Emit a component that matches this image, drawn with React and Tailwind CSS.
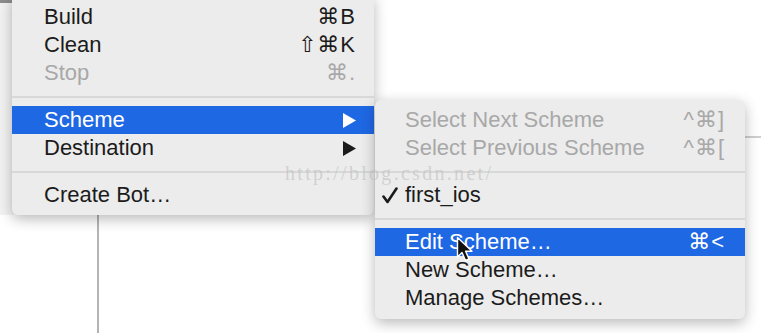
const FONT = { fontFamily: '"Liberation Sans", "DejaVu Sans", Arial, sans-serif' };

function Arrow() {
  return (
    <svg width="13" height="15" viewBox="0 0 13 15" className="fill-current">
      <path d="M0 0 L13 7.5 L0 15 Z" />
    </svg>
  );
}

function Check() {
  return (
    <svg width="16" height="17" viewBox="0 0 16 17">
      <path d="M1.5 9.5 L5.5 15 L14.5 1.5" fill="none" stroke="#1b1b1b" strokeWidth="2.6" strokeLinecap="round" strokeLinejoin="round" />
    </svg>
  );
}

function Row({ label, shortcut, disabled, active, arrow, gutter, check }) {
  const color = active ? "text-white" : disabled ? "text-[#a8a8a8]" : "text-[#1b1b1b]";
  return (
    <div
      className={`flex items-center h-7 text-[22px] leading-none ${color} ${
        active ? "bg-[#1f68e4]" : ""
      } ${gutter ? "pl-[7px] pr-[20px]" : "pl-[32px] pr-[18px]"}`}
    >
      {gutter && <span className="w-[23px] flex items-center">{check && <Check />}</span>}
      <span className="flex-1">{label}</span>
      {shortcut && <span className="tracking-[1px]">{shortcut}</span>}
      {arrow && <Arrow />}
    </div>
  );
}

function Sep() {
  return (
    <div className="h-[19px] flex items-center">
      <div className="w-full h-[2px] bg-[#d8d8d8]" />
    </div>
  );
}

function Cursor() {
  return (
    <svg className="absolute left-[456px] top-[236px]" width="18" height="28" viewBox="0 0 18 28">
      <path
        d="M1.5 1.5 L1.5 21 L6 16.5 L9.5 24.5 L13 23 L9.6 15.2 L16 15.2 Z"
        fill="#111"
        stroke="#fff"
        strokeWidth="1.4"
        strokeLinejoin="round"
      />
    </svg>
  );
}

export default function App() {
  return (
    <div className="relative w-[761px] h-[333px] bg-white overflow-hidden" style={FONT}>
      {/* background window bits */}
      <div className="absolute left-0 top-0 w-[14px] h-[215px] bg-[#f2f2f2]">
        <div className="h-[3px] bg-[#8c8c8c]" />
      </div>
      <div className="absolute left-[97px] top-[210px] w-[2px] h-[130px] bg-[#b4b4b4]" />
      <div className="absolute left-[740px] top-[136px] w-[30px] h-[2px] bg-[#cfcfcf]" />

      {/* main menu */}
      <div className="absolute left-[12px] top-[-5px] w-[362px] pt-[8px] pb-[6px] bg-[#ececec] rounded-b-[6px] shadow-[0_4px_14px_rgba(0,0,0,0.28)]">
        <Row label="Build" shortcut="⌘B" />
        <Row label="Clean" shortcut="⇧⌘K" />
        <Row label="Stop" shortcut="⌘." disabled />
        <Sep />
        <Row label="Scheme" arrow active />
        <Row label="Destination" arrow />
        <Sep />
        <Row label="Create Bot…" />
      </div>

      {/* scheme submenu */}
      <div className="absolute left-[375px] top-[100px] w-[370px] pt-[6px] pb-[7px] bg-[#ececec] rounded-[6px] shadow-[0_4px_14px_rgba(0,0,0,0.28)]">
        <Row gutter label="Select Next Scheme" shortcut="^⌘]" disabled />
        <Row gutter label="Select Previous Scheme" shortcut="^⌘[" disabled />
        <Sep />
        <Row gutter check label="first_ios" />
        <Sep />
        <Row gutter label="Edit Scheme…" shortcut="⌘<" active />
        <Row gutter label="New Scheme…" />
        <Row gutter label="Manage Schemes…" />
      </div>

      <Cursor />

      {/* watermark */}
      <div
        className="absolute left-[285px] top-[163px] text-[20px] leading-[20px] tracking-[2.3px] text-[rgba(190,190,190,0.6)] pointer-events-none"
        style={{ fontFamily: '"Liberation Serif", serif' }}
      >
        http://blog.csdn.net/
      </div>
    </div>
  );
}
